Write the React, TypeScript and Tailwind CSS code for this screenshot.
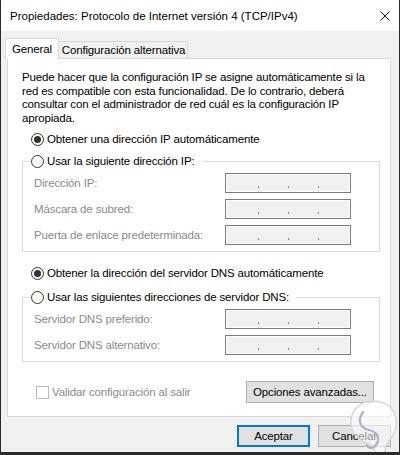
import { type ReactNode } from "react";

const FONT = "font-['Liberation_Sans',Arial,sans-serif] text-[11.5px] tracking-[-0.15px]";

function Radio({ checked, children }: { checked?: boolean; children: ReactNode }) {
  return (
    <span className="flex h-[16px] items-center gap-[3px] text-black">
      <span className="flex size-[13px] items-center justify-center rounded-full border border-[#333] bg-white">
        {checked && <span className="size-[7px] rounded-full bg-[#333]" />}
      </span>
      <span>{children}</span>
    </span>
  );
}

function IpBox() {
  return (
    <div className="flex h-[20px] w-[126px] items-end gap-[29px] border border-[#7a7a7a] bg-[#f0f0f0] pb-[4px] pl-[32px] shadow-[inset_0_0_0_1px_#ffffff]">
      <span className="h-[2px] w-[1px] bg-[#8a8a8a]" />
      <span className="h-[2px] w-[1px] bg-[#8a8a8a]" />
      <span className="h-[2px] w-[1px] bg-[#8a8a8a]" />
    </div>
  );
}

function AddressRow({ label }: { label: string }) {
  return (
    <div className="flex h-[20px] items-center justify-between">
      <span className="text-[#8a8a8a]">{label}</span>
      <IpBox />
    </div>
  );
}

function Group({ legend, rows }: { legend: string; rows: string[] }) {
  return (
    <fieldset className="w-[358px] border border-[#dcdcdc] p-0">
      <legend className="ml-[8px] pr-[8px]">
        <Radio>{legend}</Radio>
      </legend>
      <div className="flex flex-col gap-[6px] pb-[6px] pl-[11px] pr-[28px] pt-[4px]">
        {rows.map((r) => (
          <AddressRow key={r} label={r} />
        ))}
      </div>
    </fieldset>
  );
}

function Button({ children, focused }: { children: ReactNode; focused?: boolean }) {
  return (
    <button
      type="button"
      className={
        focused
          ? "flex h-[22px] w-[73px] items-center justify-center border-2 border-[#0078d7] bg-[#e1e1e1] text-black"
          : "flex h-[22px] w-[73px] items-center justify-center border border-[#adadad] bg-[#e1e1e1] text-black"
      }
    >
      {children}
    </button>
  );
}

export default function App() {
  return (
    <div
      className={`relative flex h-[455px] w-[400px] flex-col overflow-hidden border-b-[3px] border-l border-r border-[#2b2b2b] bg-[#f0f0f0] leading-[16px] ${FONT}`}
    >
      <div className="flex h-[31px] shrink-0 items-center justify-between bg-white pl-[9px] pr-[9px] text-black">
        <span className="tracking-normal">Propiedades: Protocolo de Internet versión 4 (TCP/IPv4)</span>
        <svg width="10" height="10" viewBox="0 0 10 10" className="mt-[1px]">
          <path d="M0.5 0.5 L9.5 9.5 M9.5 0.5 L0.5 9.5" stroke="#111" strokeWidth="1" />
        </svg>
      </div>

      <div className="flex flex-col pl-[6px] pr-[8px] pt-[7px]">
        <div className="relative z-10 -mb-px flex h-[21px] items-end whitespace-nowrap">
          <div className="-ml-[2px] flex h-[21px] w-[54px] items-start justify-center border-l border-r border-t border-[#d9d9d9] bg-white pt-[2px] text-black">
            General
          </div>
          <div className="flex h-[18px] w-[129px] items-center justify-center border-b border-r border-t border-[#d9d9d9] bg-[#f0f0f0] pl-[1px] text-black">
            Configuración alternativa
          </div>
        </div>

        <div className="flex h-[359px] flex-col border border-[#d9d9d9] bg-white pl-[14px] pt-[12px]">
          <p className="leading-[13.5px] text-black">
            Puede hacer que la configuración IP se asigne automáticamente si la
            <br />
            red es compatible con esta funcionalidad. De lo contrario, deberá
            <br />
            consultar con el administrador de red cuál es la configuración IP
            <br />
            apropiada.
          </p>

          <div className="ml-[9px] mt-[6px]">
            <Radio checked>Obtener una dirección IP automáticamente</Radio>
          </div>

          <div className="mt-[6px]">
            <Group
              legend="Usar la siguiente dirección IP:"
              rows={["Dirección IP:", "Máscara de subred:", "Puerta de enlace predeterminada:"]}
            />
          </div>

          <div className="ml-[9px] mt-[13px]">
            <Radio checked>Obtener la dirección del servidor DNS automáticamente</Radio>
          </div>

          <div className="mt-[8px]">
            <Group
              legend="Usar las siguientes direcciones de servidor DNS:"
              rows={["Servidor DNS preferido:", "Servidor DNS alternativo:"]}
            />
          </div>

          <div className="mt-[19px] flex w-[352px] items-center justify-between">
            <span className="ml-[14px] flex items-center gap-[3px] text-[#8a8a8a]">
              <span className="size-[13px] border border-[#bcbcbc] bg-white" />
              Validar configuración al salir
            </span>
            <button
              type="button"
              className="flex h-[22px] w-[128px] items-center justify-center border border-[#adadad] bg-[#e1e1e1] text-black"
            >
              Opciones avanzadas...
            </button>
          </div>
        </div>

        <div className="flex justify-end gap-[8px] pt-[8px]">
          <Button focused>Aceptar</Button>
          <Button>Cancelar</Button>
        </div>
      </div>

      <svg
        width="60"
        height="60"
        viewBox="0 0 60 60"
        className="pointer-events-none absolute left-[344px] top-[398px]"
      >
        <path
          d="M28 3 C15 3 5 13 6 26 C7 36 14 42 22 45 C26 47 30 52 32 58 L40 58 C39 50 42 45 46 40 C52 33 53 22 49 14 C45 7 37 3 28 3 Z"
          fill="rgba(255,255,255,0.55)"
          stroke="#d6d6d6"
          strokeWidth="1.5"
        />
        <path
          d="M18 14 C12 22 15 30 24 32 C32 34 36 40 31 47 C28 51 23 51 22 47"
          fill="none"
          stroke="#a8b4c2"
          strokeWidth="2.2"
          strokeLinecap="round"
        />
      </svg>
    </div>
  );
}
